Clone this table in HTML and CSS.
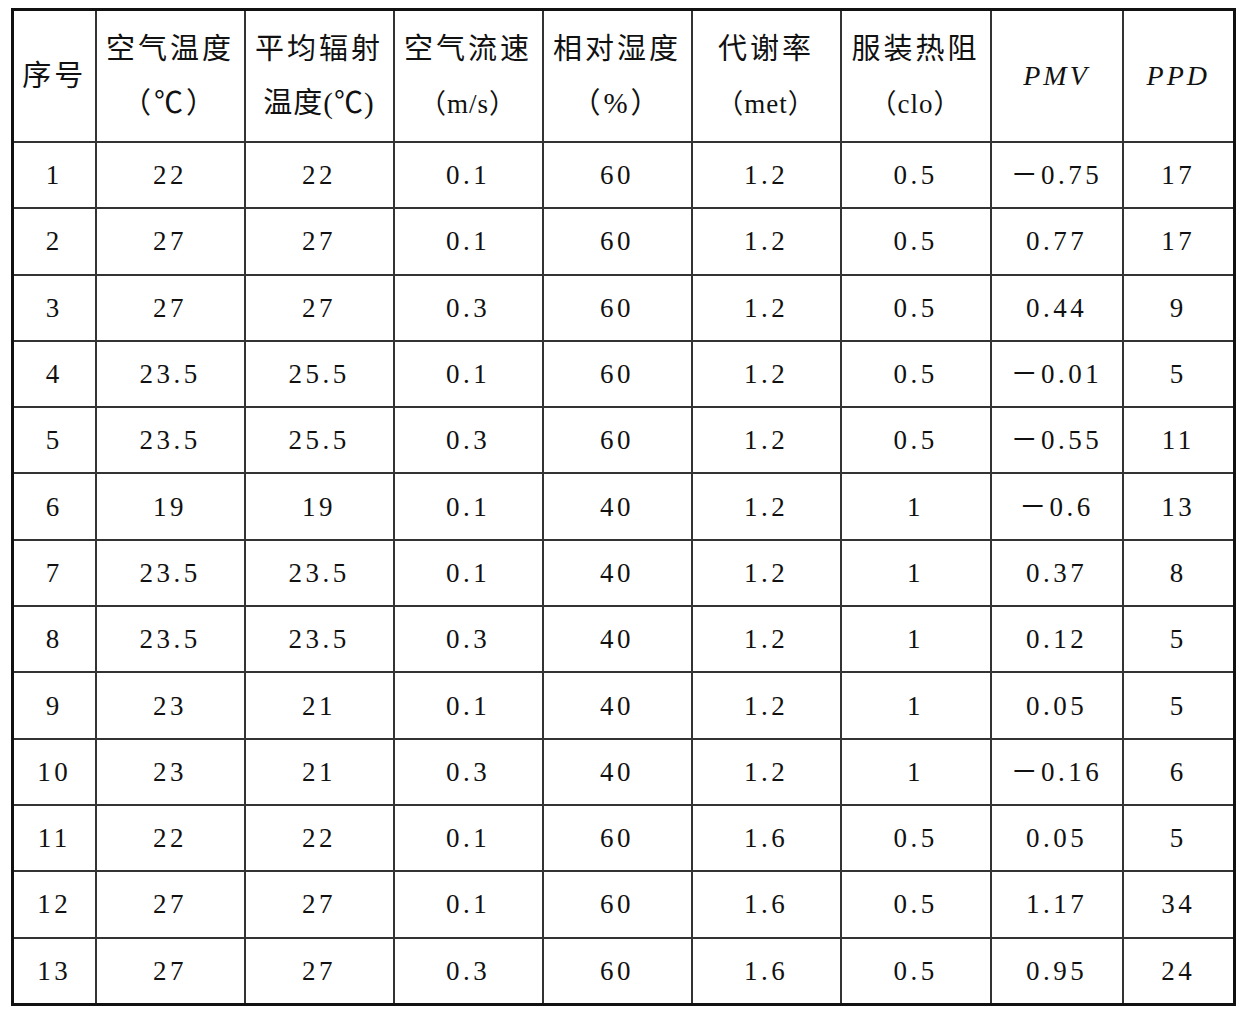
FILE: index.html
```html
<!DOCTYPE html>
<html lang="zh">
<head>
<meta charset="utf-8">
<link rel="stylesheet" href="styles.css">
</head>
<body>
<table class="pmv">
<colgroup>
<col class="c1"><col class="c2"><col class="c2"><col class="c2"><col class="c2"><col class="c2"><col class="c7"><col class="c8"><col class="c9">
</colgroup>
<thead>
<tr>
<th>序号</th>
<th>空气温度<br>（℃）</th>
<th>平均辐射<br><span class="tight">温度(℃)</span></th>
<th>空气流速<br><span class="lat">（m/s）</span></th>
<th>相对湿度<br>（%）</th>
<th>代谢率<br><span class="lat">（met）</span></th>
<th>服装热阻<br><span class="lat">（clo）</span></th>
<th class="it">PMV</th>
<th class="it">PPD</th>
</tr>
</thead>
<tbody>
<tr><td>1</td><td>22</td><td>22</td><td>0.1</td><td>60</td><td>1.2</td><td>0.5</td><td>－0.75</td><td>17</td></tr>
<tr><td>2</td><td>27</td><td>27</td><td>0.1</td><td>60</td><td>1.2</td><td>0.5</td><td>0.77</td><td>17</td></tr>
<tr><td>3</td><td>27</td><td>27</td><td>0.3</td><td>60</td><td>1.2</td><td>0.5</td><td>0.44</td><td>9</td></tr>
<tr><td>4</td><td>23.5</td><td>25.5</td><td>0.1</td><td>60</td><td>1.2</td><td>0.5</td><td>－0.01</td><td>5</td></tr>
<tr><td>5</td><td>23.5</td><td>25.5</td><td>0.3</td><td>60</td><td>1.2</td><td>0.5</td><td>－0.55</td><td>11</td></tr>
<tr><td>6</td><td>19</td><td>19</td><td>0.1</td><td>40</td><td>1.2</td><td>1</td><td>－0.6</td><td>13</td></tr>
<tr><td>7</td><td>23.5</td><td>23.5</td><td>0.1</td><td>40</td><td>1.2</td><td>1</td><td>0.37</td><td>8</td></tr>
<tr><td>8</td><td>23.5</td><td>23.5</td><td>0.3</td><td>40</td><td>1.2</td><td>1</td><td>0.12</td><td>5</td></tr>
<tr><td>9</td><td>23</td><td>21</td><td>0.1</td><td>40</td><td>1.2</td><td>1</td><td>0.05</td><td>5</td></tr>
<tr><td>10</td><td>23</td><td>21</td><td>0.3</td><td>40</td><td>1.2</td><td>1</td><td>－0.16</td><td>6</td></tr>
<tr><td>11</td><td>22</td><td>22</td><td>0.1</td><td>60</td><td>1.6</td><td>0.5</td><td>0.05</td><td>5</td></tr>
<tr><td>12</td><td>27</td><td>27</td><td>0.1</td><td>60</td><td>1.6</td><td>0.5</td><td>1.17</td><td>34</td></tr>
<tr><td>13</td><td>27</td><td>27</td><td>0.3</td><td>60</td><td>1.6</td><td>0.5</td><td>0.95</td><td>24</td></tr>
</tbody>
</table>
</body>
</html>
```
FILE: styles.css
```css
html, body {
  margin: 0;
  padding: 0;
  background: #ffffff;
}
body {
  padding: 8px 0 0 11px;
  font-family: "Liberation Serif", "Noto Sans CJK SC", serif;
  color: #111111;
}
.pmv {
  border-collapse: collapse;
  table-layout: fixed;
  width: 1225px;
  border: 3px solid #111111;
}
.c1 { width: 83px; }
.c2 { width: 149px; }
.c7 { width: 150px; }
.c8 { width: 132px; }
.c9 { width: 112px; }
.pmv th, .pmv td {
  border: 2px solid #333333;
  text-align: center;
  vertical-align: middle;
  padding: 0;
  overflow: hidden;
  white-space: nowrap;
}
.pmv th {
  height: 130px;
  font-weight: normal;
  font-size: 29px;
  line-height: 54px;
  letter-spacing: 3px;
}
.pmv th .lat {
  font-size: 27px;
  letter-spacing: 1px;
}
.pmv th .tight {
  letter-spacing: 1px;
}
.pmv th.it {
  font-style: italic;
  font-size: 28px;
  letter-spacing: 3px;
}
.pmv td {
  height: 64.3px;
  font-size: 27px;
  letter-spacing: 3.5px;
  line-height: 30px;
}
```
